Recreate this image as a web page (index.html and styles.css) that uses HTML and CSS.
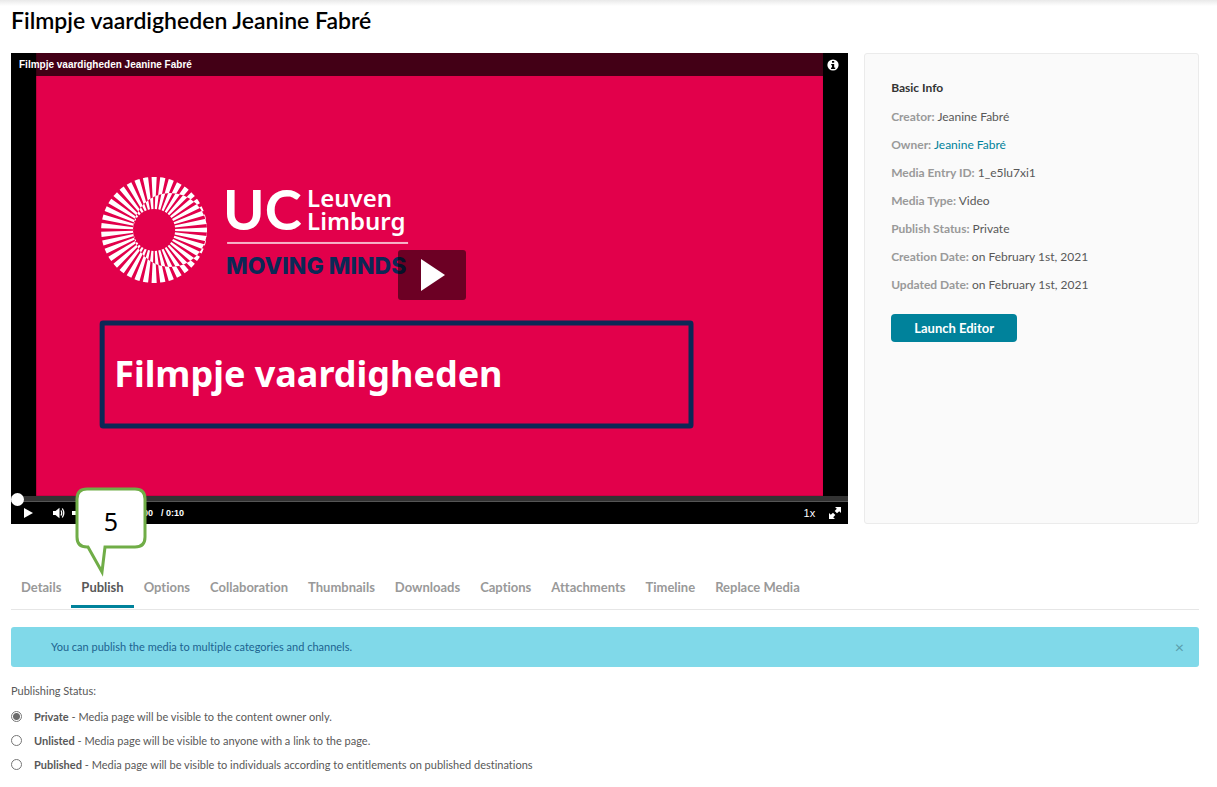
FILE: index.html
```html
<!DOCTYPE html>
<html lang="en">
<head>
  <meta charset="UTF-8" />
  <title>Filmpje vaardigheden Jeanine Fabré</title>
  <meta name="viewport" content="width=device-width, initial-scale=1" />
  <link rel="stylesheet" href="styles.css">
</head>
<body>
  <main class="page">
    <h1>Filmpje vaardigheden Jeanine Fabré</h1>

    <div class="media-row">
      <section class="player">
        <div class="stage">
          <svg class="slide" viewBox="0 0 787 443">
            <defs>
              <clipPath id="twist"><circle cx="134" cy="177" r="37" /></clipPath>
              <clipPath id="around"><path clip-rule="evenodd" d="M60 120h120v120H60zM97 177a37 37 0 1 0 74 0a37 37 0 1 0 -74 0z" /></clipPath>
            </defs>
            <rect width="787" height="443" fill="#e2004b" />
            <!-- sunburst -->
            <g fill="none" stroke="#fff" stroke-width="32">
              <g clip-path="url(#around)">
                <circle cx="118" cy="177" r="37" pathLength="76" stroke-dasharray="1.2 0.8" stroke-dashoffset="1.6" />
              </g>
              <g clip-path="url(#twist)">
                <circle cx="118" cy="177" r="37" pathLength="76" stroke-dasharray="1.2 0.8" stroke-dashoffset="0.6" />
              </g>
            </g>
            <text class="logo-uc" x="187" y="177">UC</text>
            <text class="logo-city" x="271" y="154">Leuven</text>
            <text class="logo-city" x="271" y="177">Limburg</text>
            <rect x="191" y="189" width="181" height="2" fill="#f7b3c9" />
            <text class="logo-motto" x="190" y="221">MOVING MINDS</text>
            <rect x="66" y="270" width="589" height="103" rx="1" fill="none" stroke="#0c2856" stroke-width="5" />
            <text class="slide-title" x="78" y="334">Filmpje vaardigheden</text>
          </svg>
          <div class="title-bar">
            <span>Filmpje vaardigheden Jeanine Fabré</span>
            <button type="button" class="icon-btn" aria-label="Info">
              <svg width="12" height="12" viewBox="0 0 12 12"><circle cx="6" cy="6" r="5.6" fill="#fff" /><path d="M5 2h2.2v1.8H5zM4.2 5h3v3.6h1V10H4V8.600h1V6.300h-.8z" fill="#000" /></svg>
            </button>
          </div>
          <button type="button" class="big-play" aria-label="Play clip">
            <svg width="24" height="32" viewBox="0 0 24 32"><path d="M0 0L24 16L0 32z" fill="#fff" /></svg>
          </button>
        </div>
        <div class="seek"><span class="seek-handle"></span></div>
        <div class="controls">
          <button type="button" class="icon-btn" aria-label="Play">
            <svg width="9" height="10" viewBox="0 0 9 10"><path d="M0 0L9 5L0 10z" fill="#fff" /></svg>
          </button>
          <button type="button" class="icon-btn volume" aria-label="Mute">
            <svg width="12" height="12" viewBox="0 0 12 12"><path d="M0 4h2.500L6.500 .8v10.400L2.500 8H0z" fill="#fff" /><path d="M8 3.500q1.500 2.500 0 5M9.300 1.500q3 4.500 0 9" fill="none" stroke="#fff" stroke-width="1.300" /></svg>
          </button>
          <span class="volume-bar"></span>
          <span class="time">0:00</span>
          <span class="time">/ 0:10</span>
          <button type="button" class="icon-btn speed">1x</button>
          <button type="button" class="icon-btn" aria-label="Full screen">
            <svg width="12" height="12" viewBox="0 0 12 12"><path d="M6 0h6v6L10.200 4.200L8 6.300L5.700 4L7.800 1.800zM0 6L1.800 7.800L4 5.700L6.300 8L4.200 10.200L6 12H0z" fill="#fff" /></svg>
          </button>
        </div>
      </section>

      <aside class="info">
        <h2>Basic Info</h2>
        <p><b>Creator:</b> Jeanine Fabré</p>
        <p><b>Owner:</b> <a href="#">Jeanine Fabré</a></p>
        <p><b>Media Entry ID:</b> 1_e5lu7xi1</p>
        <p><b>Media Type:</b> Video</p>
        <p><b>Publish Status:</b> Private</p>
        <p><b>Creation Date:</b> on February 1st, 2021</p>
        <p><b>Updated Date:</b> on February 1st, 2021</p>
        <button type="button" class="launch">Launch Editor</button>
      </aside>
    </div>

    <nav class="tabs">
      <a href="#">Details</a>
      <a href="#" class="active">Publish</a>
      <a href="#">Options</a>
      <a href="#">Collaboration</a>
      <a href="#">Thumbnails</a>
      <a href="#">Downloads</a>
      <a href="#">Captions</a>
      <a href="#">Attachments</a>
      <a href="#">Timeline</a>
      <a href="#">Replace Media</a>
      <div class="callout">
        <svg width="72" height="90" viewBox="0 0 72 90"><path d="M12 2H60Q70 2 70 12V50Q70 60 60 60H30L27 85L13 60H12Q2 60 2 50V12Q2 2 12 2z" fill="#fff" stroke="#70ad47" stroke-width="3" /></svg>
        <span>5</span>
      </div>
    </nav>

    <div class="alert">
      <span>You can publish the media to multiple categories and channels.</span>
      <button type="button" aria-label="Close">×</button>
    </div>

    <form class="status">
      <p>Publishing Status:</p>
      <label><input type="radio" name="status" checked /><span><b>Private</b> - Media page will be visible to the content owner only.</span></label>
      <label><input type="radio" name="status" /><span><b>Unlisted</b> - Media page will be visible to anyone with a link to the page.</span></label>
      <label><input type="radio" name="status" /><span><b>Published</b> - Media page will be visible to individuals according to entitlements on published destinations</span></label>
    </form>
  </main>
</body>
</html>
```
FILE: styles.css
```css
* {
  box-sizing: border-box;
}
body {
  margin: 0;
  font-family: Lato, "Liberation Sans", sans-serif;
  font-size: 12px;
  line-height: 20px;
  font-variant-ligatures: none;
  color: #585858;
  background: linear-gradient(#e9e9e9, #fff 6px) no-repeat;
}
button {
  font-family: inherit;
  border: none;
  padding: 0;
  cursor: pointer;
}
a {
  color: #00829b;
  text-decoration: none;
}
.page {
  padding: 4px 18px 12px 11px;
}
h1 {
  margin: 0 0 17px;
  font-size: 23px;
  line-height: 32px;
  font-weight: 600;
  color: #000;
}
.media-row {
  display: grid;
  grid-template-columns: 5fr 2fr;
  gap: 16px;
}

/* player */
.player {
  aspect-ratio: 16 / 9;
  display: flex;
  flex-direction: column;
  background: #000;
  color: #fff;
  font-family: "Liberation Sans", sans-serif;
}
.stage {
  position: relative;
  flex: 1;
  min-height: 0;
}
.slide {
  display: block;
  width: 100%;
  height: 100%;
}
.slide text {
  fill: #fff;
  font-weight: 700;
}
.slide .logo-uc {
  font-family: Lato, sans-serif;
  font-size: 56px;
}
.slide .logo-city {
  font-family: "Noto Sans", sans-serif;
  font-size: 24px;
  font-weight: 600;
}
.slide .logo-motto {
  font-family: Inter, sans-serif;
  font-size: 23px;
  font-weight: 800;
  fill: #0c2856;
}
.slide .slide-title {
  font-family: "Noto Sans", sans-serif;
  font-size: 36px;
}
.title-bar {
  position: absolute;
  top: 0;
  left: 0;
  right: 0;
  height: 23px;
  padding: 0 9px 0 8px;
  display: flex;
  align-items: center;
  justify-content: space-between;
  background: rgba(0,0,0,0.7);
  font-size: 10px;
  line-height: 24px;
  font-weight: 700;
}
.icon-btn {
  display: flex;
  background: none;
  color: #fff;
}
.big-play {
  position: absolute;
  top: 50%;
  left: 50%;
  width: 68px;
  height: 50px;
  margin: -24px 0 0 -32px;
  padding-left: 3px;
  display: flex;
  align-items: center;
  justify-content: center;
  border-radius: 3px;
  background: rgba(0,0,0,0.52);
}
.seek {
  position: relative;
  height: 6px;
  background: #333;
  border-bottom: 1px solid #555;
}
.seek-handle {
  position: absolute;
  left: 0;
  top: -3px;
  width: 13px;
  height: 13px;
  border-radius: 50%;
  background: #fff;
}
.controls {
  height: 22px;
  padding: 0 7px 0 13px;
  display: flex;
  align-items: center;
}
.volume {
  margin-left: 20px;
}
.volume-bar {
  width: 55px;
  height: 4px;
  margin: 0 8px 0 7px;
  background: #fff;
}
.time {
  margin-right: 8px;
  font-size: 9px;
  font-weight: 700;
}
.speed {
  margin-left: auto;
  margin-right: 14px;
  font-size: 11px;
}

/* side panel */
.info {
  padding: 24px 26px;
  background: #fafafa;
  border: 1px solid #ebebeb;
  border-radius: 3px;
}
.info h2 {
  margin: 0 0 9px;
  font-size: 12px;
  line-height: 20px;
  color: #333;
}
.info p {
  margin: 0 0 8px;
}
.info p b {
  color: #999;
}
.launch {
  width: 126px;
  height: 28px;
  margin-top: 11px;
  border-radius: 4px;
  background: #00829b;
  color: #fff;
  font-size: 13px;
  font-weight: 700;
}

/* tabs */
.tabs {
  position: relative;
  display: flex;
  margin-top: 42px;
  padding-bottom: 1px;
  border-bottom: 1px solid #e6e6e6;
}
.tabs a {
  padding: 11px 10px 8px;
  border-bottom: 3px solid transparent;
  font-size: 13px;
  font-weight: 700;
  color: #999;
}
.tabs .active {
  color: #585858;
  border-bottom-color: #00829b;
}
.callout {
  position: absolute;
  left: 64px;
  bottom: 32px;
  width: 72px;
  height: 90px;
}
.callout span {
  position: absolute;
  top: 2px;
  left: 0;
  width: 72px;
  line-height: 64px;
  text-align: center;
  font-family: "Noto Sans", sans-serif;
  font-size: 25px;
  color: #000;
}

.alert {
  display: flex;
  align-items: center;
  justify-content: space-between;
  margin-top: 17px;
  padding: 10px 15px 10px 40px;
  border-radius: 3px;
  background: #80d9e9;
  color: #1c6390;
  font-size: 11px;
}
.alert button {
  background: none;
  color: #5a9dab;
  font-size: 16px;
  line-height: 20px;
}

.status {
  margin-top: 14px;
  font-size: 11px;
}
.status p {
  margin: 0 0 4px;
}
.status label {
  display: flex;
  align-items: center;
  height: 24px;
}
.status input {
  appearance: none;
  width: 11px;
  height: 11px;
  margin: 0 12px 0 0;
  border: 1px solid #767676;
  border-radius: 50%;
  background: #fff;
}
.status input:checked {
  background: radial-gradient(#6a6a6a 3px, #fff 4px);
}
```
